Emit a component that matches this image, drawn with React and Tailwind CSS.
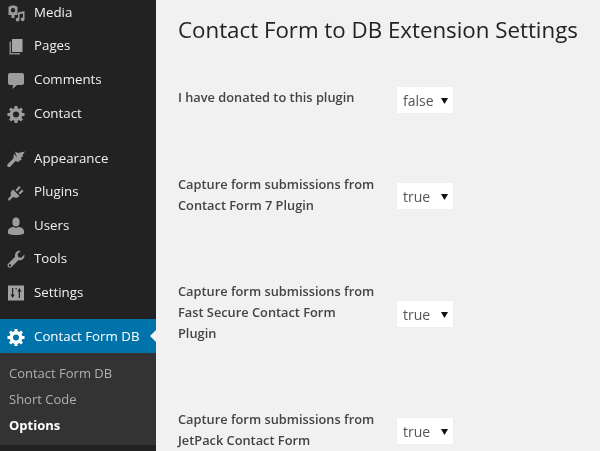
import React from "react";

const fill = "#9c9c9c";
const Ic = ({ children, c = fill }) => (
  <svg width="20" height="20" viewBox="0 0 20 20" fill={c}>{children}</svg>
);
const Gear = ({ c }) => (
  <Ic c={c}>
    <path fillRule="evenodd" d="M18.500 12h-2.180c-.17.7-.44 1.350-.81 1.930l1.540 1.540-2.100 2.100-1.540-1.540c-.58.36-1.230.63-1.910.79V19h-3v-2.180c-.68-.16-1.330-.43-1.910-.79l-1.540 1.540-2.120-2.120 1.540-1.540c-.36-.58-.63-1.230-.79-1.910H1.500V9.030h2.170c.16-.7.44-1.350.8-1.940L2.930 5.550l2.100-2.100 1.540 1.540c.58-.37 1.240-.64 1.930-.81V2h3v2.180c.68.16 1.330.43 1.910.79l1.540-1.540 2.120 2.120-1.540 1.540c.36.59.64 1.240.8 1.940h2.170V12zM10 13.500a3 3 0 100-6 3 3 0 000 6z" />
  </Ic>
);
const icons = {
  Media: (
    <Ic>
      <path fillRule="evenodd" d="M2.500 3.500h1.500L5 2.500h4l1 1h1.500v8.500H8.500v3H5.500v-3h-3zM7 5a2.200 2.200 0 100 4.400A2.200 2.200 0 007 5z" />
      <path d="M12 9.500l6.500-1.500v8.300a1.900 1.900 0 11-1.500-1.800v-4l-3.500.8v5.300a1.900 1.900 0 11-1.500-1.800z" />
    </Ic>
  ),
  Pages: (
    <Ic>
      <path d="M6 3h10.500v13H6z" fill="#a8a8a8" />
      <path d="M3.500 5.500H5v11.500h9v1.500H3.500z" fill="#8a8a8a" />
    </Ic>
  ),
  Comments: (
    <Ic>
      <path d="M4 3h12a2 2 0 012 2v8a2 2 0 01-2 2h-5l-4.500 4 .5-4H4a2 2 0 01-2-2V5a2 2 0 012-2z" />
    </Ic>
  ),
  Contact: <Gear />,
  Appearance: (
    <Ic>
      <path d="M9 2.500l3 1.500 7-1.500-2.500 3.500.5 1.500-2 1 .5 2.500-2 .5-1 1.500z" />
      <path d="M8 4.500l5.500 7-1.500 1.500-2.500-1L4.500 17.500c-1 .8-2.300.6-2.900-.1-.6-.8-.5-1.800.4-2.700l5.300-5.200z" />
    </Ic>
  ),
  Plugins: (
    <Ic>
      <path d="M7 7.500L13.500 14c-2 2.500-5 2-6.500 1l-4 4-1-2 3-3.500c-1-2 0-4.500 2-6z" />
      <path d="M9.500 8l3.500-4 1.600 1.600-3.500 4zM12.500 11l3.500-3.500 1.500 1.500-3.500 3.500z" />
    </Ic>
  ),
  Users: (
    <Ic>
      <ellipse cx="10" cy="6" rx="3.600" ry="4.500" />
      <path d="M2 15c0-2.500 3-3.500 5-4.300 1.500 1.400 4.500 1.400 6 0 2 .8 5 1.800 5 4.300v2.500c-2 1-5 1.500-8 1.500s-6-.5-8-1.500z" />
    </Ic>
  ),
  Tools: (
    <Ic>
      <path fillRule="evenodd" d="M18.300 5.600c.4 1.700-.1 3.300-1.300 4.400-1.200 1.200-3 1.600-4.500 1.100L5.600 18c-1 1-2.500 1-3.400.1-1-1-1-2.500 0-3.400l6.900-6.900c-.5-1.600-.1-3.300 1.100-4.500 1.200-1.200 2.800-1.700 4.400-1.300l-3 3 .6 3.200 3.100.6zM4 15.200a1.200 1.200 0 100 2.400 1.200 1.200 0 000-2.400z" />
    </Ic>
  ),
  Settings: (
    <Ic>
      <path fill="#a2a2a2" d="M2 2.500h16v15H2z" />
      <path fill="#222" d="M6 5h1.200v6.500h1.500L6.600 15l-2.100-3.500H6zM12.800 15h1.200V8.500h1.500L13.400 5l-2.100 3.500h1.500zM9.500 5h1.200v1.200H9.500z" />
    </Ic>
  ),
};

const Item = ({ label }) => (
  <div className="flex h-[33.6px] items-center pl-[6px]">
    <span className="flex w-[28px] shrink-0 items-center">{icons[label]}</span>
    <span className="text-[13.3px] text-[#f0f0f0]">{label}</span>
  </div>
);

const Sel = ({ v, cls }) => (
  <div className={"flex h-[26px] w-[56px] shrink-0 items-center justify-between bg-white pl-[6px] pr-[5px] pt-[1px] text-[14px] leading-[24px] text-[#555] shadow-[0_0_1px_#e0e0e0] " + cls}>
    <span>{v}</span>
    <svg width="7" height="6" viewBox="0 0 7 6" fill="#111"><path d="M0 0h7L3.500 6z" /></svg>
  </div>
);

const Row = ({ cls, lines, v, sel }) => (
  <div className={"flex items-start " + cls}>
    <div className="w-[219px] shrink-0 text-[12.8px] font-semibold leading-[21.2px] text-[#444]">
      {lines.map((l) => <div key={l}>{l}</div>)}
    </div>
    <Sel v={v} cls={sel} />
  </div>
);

export default function App() {
  return (
    <div className="flex h-[451px] w-[600px] overflow-hidden bg-[#f1f1f1] font-['Open_Sans',sans-serif] blur-[0.35px]">
      <aside className="h-full w-[156px] shrink-0 bg-[#222222]">
        <div className="-mt-[4px]">
          {["Media", "Pages", "Comments", "Contact"].map((l) => <Item key={l} label={l} />)}
        </div>
        <div className="mt-[11.500px]">
          {["Appearance", "Plugins", "Users", "Tools", "Settings"].map((l) => <Item key={l} label={l} />)}
        </div>
        <div className="relative mt-[9.500px] flex h-[33.500px] items-center bg-[#0073aa] pl-[6px] pt-[1px]">
          <span className="flex w-[28px] items-center"><Gear c="#ffffff" /></span>
          <span className="text-[13.3px] text-white">Contact Form DB</span>
          <span className="absolute -right-px top-[10px] h-0 w-0 border-y-[7px] border-r-[7px] border-y-transparent border-r-[#f1f1f1]" />
        </div>
        <div className="flex h-[92px] flex-col bg-[#333333] pl-[9px] pt-[7px] text-[13px] leading-[26px] text-[#b0b0b0]">
          <div>Contact Form DB</div>
          <div>Short Code</div>
          <div className="font-bold text-white">Options</div>
        </div>
      </aside>
      <main className="flex-1 pl-[22px]">
        <h1 className="mt-[14px] whitespace-nowrap text-[22.3px] leading-[32px] text-[#222]">Contact Form to DB Extension Settings</h1>
        <Row cls="mt-[41px] h-[26px]" sel="mt-0" v="false" lines={["I have donated to this plugin"]} />
        <Row cls="mt-[60.500px]" sel="mt-[9.500px]" v="true" lines={["Capture form submissions from", "Contact Form 7 Plugin"]} />
        <Row cls="mt-[65px]" sel="mt-[20.500px]" v="true" lines={["Capture form submissions from", "Fast Secure Contact Form", "Plugin"]} />
        <Row cls="mt-[64.300px]" sel="mt-[9.600px]" v="true" lines={["Capture form submissions from", "JetPack Contact Form"]} />
      </main>
    </div>
  );
}
